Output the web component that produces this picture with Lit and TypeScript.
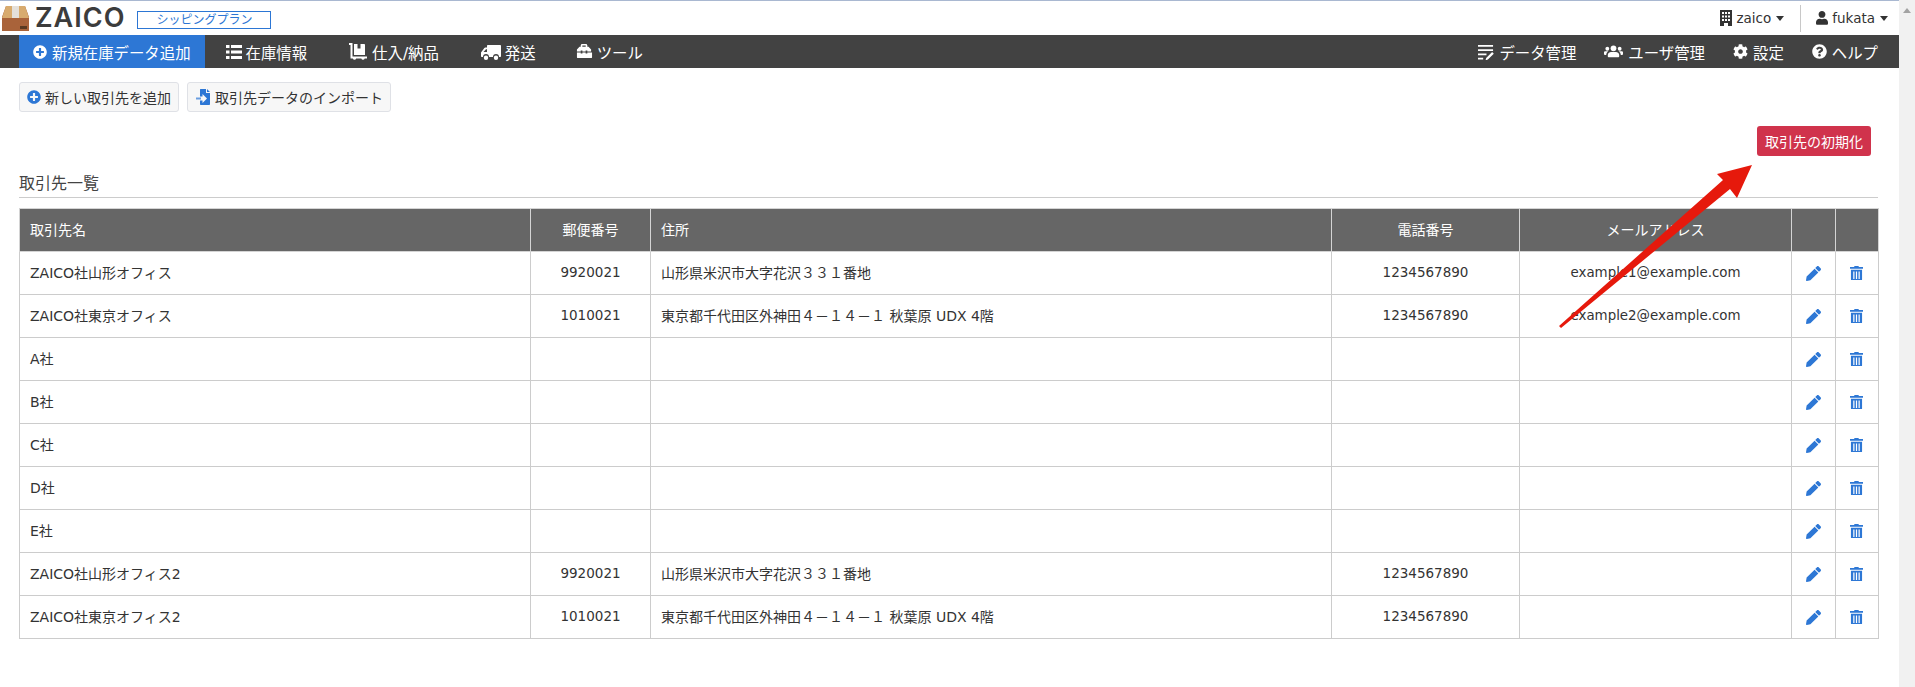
import { LitElement, html, css, svg } from "lit";
import { customElement } from "lit/decorators.js";

const ic = (w: number, vb: string, body: unknown, cls = "") =>
  html`<svg class="ic ${cls}" style="width:${w}px" viewBox="${vb}" fill="currentColor">${body}</svg>`;

const PLUS = svg`<path d="M256 8C119 8 8 119 8 256s111 248 248 248 248-111 248-248S393 8 256 8zm144 276c0 6.6-5.4 12-12 12h-92v92c0 6.6-5.4 12-12 12h-56c-6.6 0-12-5.4-12-12v-92h-92c-6.6 0-12-5.4-12-12v-56c0-6.6 5.4-12 12-12h92v-92c0-6.6 5.4-12 12-12h56c6.6 0 12 5.4 12 12v92h92c6.6 0 12 5.4 12 12v56z"/>`;
const QUESTION = svg`<path d="M504 256c0 136.997-111.043 248-248 248S8 392.997 8 256C8 119.083 119.043 8 256 8s248 111.083 248 248zM262.655 90c-54.497 0-89.255 22.957-116.549 63.758-3.536 5.286-2.353 12.415 2.715 16.258l34.699 26.31c5.205 3.947 12.621 3.008 16.665-2.122 17.864-22.658 30.113-35.797 57.303-35.797 20.429 0 45.698 13.148 45.698 32.958 0 14.976-12.363 22.667-32.534 33.976C247.128 238.528 216 254.941 216 296v4c0 6.627 5.373 12 12 12h56c6.627 0 12-5.373 12-12v-1.333c0-28.462 83.186-29.647 83.186-106.667 0-58.002-60.165-102-116.531-102zM256 338c-25.365 0-46 20.635-46 46 0 25.364 20.635 46 46 46s46-20.636 46-46c0-25.365-20.635-46-46-46z"/>`;
const COG = svg`<path d="M487.4 315.7l-42.6-24.6c4.3-23.2 4.3-47 0-70.2l42.6-24.6c4.9-2.8 7.1-8.6 5.5-14-11.1-35.6-30-67.8-54.7-94.6-3.8-4.1-10-5.1-14.8-2.3L380.8 110c-17.9-15.4-38.5-27.3-60.8-35.1V25.8c0-5.6-3.9-10.5-9.4-11.7-36.7-8.2-74.3-7.8-109.2 0-5.5 1.2-9.4 6.1-9.4 11.7V75c-22.2 7.9-42.8 19.8-60.8 35.1L88.7 85.5c-4.9-2.8-11-1.9-14.8 2.3-24.7 26.7-43.6 58.9-54.7 94.6-1.7 5.4.6 11.2 5.5 14L67.3 221c-4.3 23.2-4.3 47 0 70.2l-42.6 24.6c-4.9 2.8-7.1 8.6-5.5 14 11.1 35.6 30 67.8 54.7 94.6 3.8 4.1 10 5.1 14.8 2.3l42.6-24.6c17.9 15.4 38.5 27.3 60.8 35.1v49.2c0 5.6 3.9 10.5 9.4 11.7 36.7 8.2 74.3 7.8 109.2 0 5.5-1.2 9.4-6.1 9.4-11.7v-49.2c22.2-7.9 42.8-19.8 60.8-35.1l42.6 24.6c4.9 2.8 11 1.9 14.8-2.3 24.7-26.7 43.6-58.9 54.7-94.6 1.5-5.5-.7-11.3-5.6-14.1zM256 336c-44.1 0-80-35.9-80-80s35.9-80 80-80 80 35.9 80 80-35.9 80-80 80z"/>`;
const USER = svg`<path d="M224 256c70.7 0 128-57.3 128-128S294.7 0 224 0 96 57.3 96 128s57.3 128 128 128zm89.6 32h-16.7c-22.2 10.2-46.9 16-72.9 16s-50.6-5.8-72.9-16h-16.7C60.2 288 0 348.2 0 422.4V464c0 26.5 21.5 48 48 48h352c26.5 0 48-21.5 48-48v-41.6c0-74.2-60.2-134.4-134.4-134.4z"/>`;
const PENCIL = svg`<path d="M497.9 142.1l-46.1 46.1c-4.7 4.7-12.3 4.7-17 0l-111-111c-4.7-4.7-4.7-12.3 0-17l46.1-46.1c18.7-18.7 49.1-18.7 67.9 0l60.1 60.1c18.8 18.7 18.8 49.1 0 67.9zM284.2 99.8L21.6 362.4.4 483.9c-2.9 16.4 11.4 30.6 27.8 27.8l121.5-21.3 262.6-262.6c4.7-4.7 4.7-12.3 0-17l-111-111c-4.8-4.7-12.4-4.7-17.1 0z"/>`;
const TRASH = svg`<path fill-rule="evenodd" d="M5 0h4l.7 1H14v2H0V1h4.300zM1 4h12v10.500c0 .8-.7 1.500-1.500 1.500h-9C1.700 16 1 15.300 1 14.500zM3.500 6v8h1.300V6zM6.350 6v8h1.300V6zM9.200 6v8h1.300V6z"/>`;
const LIST = svg`<path d="M0 1h3.500v3H0zM5 1h11v3H5zM0 6.500h3.500v3H0zM5 6.500h11v3H5zM0 12h3.500v3H0zM5 12h11v3H5z"/>`;
const DOLLY = svg`<path d="M0 0h3.500v13.500H18v2h-2.300a1.800 1.800 0 0 1-3.400 0H7.200a1.800 1.800 0 0 1-3.400 0H1.500V2H0zM5 1h3.500v4.500h3V1H15c.6 0 1 .4 1 1v10H5z"/>`;
const TRUCK = svg`<path d="M7 1h12c.6 0 1 .4 1 1v10c0 .6-.4 1-1 1h-1a3 3 0 0 0-6 0H8a3 3 0 0 0-6 0H1c-.6 0-1-.4-1-1V8.500L3 4.500C3.500 3.800 4 3.500 5 3.500h1V2c0-.6.4-1 1-1zM2.500 8H6V5.200H5zM5 11.500a2.200 2.200 0 1 1 0 4.400 2.200 2.200 0 0 1 0-4.400zM15 11.500a2.200 2.200 0 1 1 0 4.400 2.200 2.200 0 0 1 0-4.400z"/>`;
const TOOLBOX = svg`<path d="M5 4V2.500C5 1.700 5.700 1 6.500 1h4c.8 0 1.500.7 1.500 1.500V4h1.300l2.700 3v2H12V8h-1.800v1H6.800V8H5v1H1V7l2.700-3zM6.700 4h3.600V2.700H6.700zM1 10h4v1.200h1.800V10h3.400v1.200H12V10h5v5c0 .5-.5 1-1 1H2c-.5 0-1-.5-1-1z"/>`;
const DATA = svg`<path d="M0 1h16v2H0zM0 5.500h16v2H0zM0 10h9v2H0zM0 14.500h5.500v2H0zM15 8.500l1.800 1.800-6.300 6.300-2.500.7.700-2.500z"/>`;
const USERS = svg`<circle cx="3.500" cy="5" r="2"/><circle cx="16.500" cy="5" r="2"/><circle cx="10" cy="4.500" r="3"/><path d="M0 8.800C0 8 .6 7.600 1.500 7.600h3c-1.300 1-2 2.200-2.200 3.900H1c-.6 0-1-.4-1-1zM20 8.800c0-.8-.6-1.200-1.500-1.200h-3c1.300 1 2 2.200 2.200 3.900H19c.6 0 1-.4 1-1zM7.500 8.300h5c2 0 3.500 1.400 3.500 3.200v1.300c0 .7-.5 1.200-1.200 1.200H5.200C4.500 14 4 13.500 4 12.800v-1.300c0-1.800 1.500-3.200 3.500-3.200z"/>`;
const BUILDING = svg`<path fill-rule="evenodd" d="M0 0h12v16H8v-3H4v3H0zM2 2v2h2V2zM5 2v2h2V2zM8 2v2h2V2zM2 5.500v2h2v-2zM5 5.500v2h2v-2zM8 5.500v2h2v-2zM2 9v2h2V9zM5 9v2h2V9zM8 9v2h2V9z"/>`;
const IMPORT = svg`<path fill-rule="evenodd" d="M4.500 0H10v4h4v11c0 .6-.4 1-1 1H5c-.6 0-1-.4-1-1v-3.500h2.500V14l4.500-4.500L6.500 5v2.500H4V.5c0-.3.2-.5.5-.5zM11 0l3 3h-3z"/><path d="M0 8.500h5v2H0z" opacity=".7"/>`;

type Row = [string, string, string, string, string];
const ROWS: Row[] = [
  ["ZAICO社山形オフィス", "9920021", "山形県米沢市大字花沢３３１番地", "1234567890", "example1@example.com"],
  ["ZAICO社東京オフィス", "1010021", "東京都千代田区外神田４－１４－１ 秋葉原 UDX 4階", "1234567890", "example2@example.com"],
  ["A社", "", "", "", ""],
  ["B社", "", "", "", ""],
  ["C社", "", "", "", ""],
  ["D社", "", "", "", ""],
  ["E社", "", "", "", ""],
  ["ZAICO社山形オフィス2", "9920021", "山形県米沢市大字花沢３３１番地", "1234567890", ""],
  ["ZAICO社東京オフィス2", "1010021", "東京都千代田区外神田４－１４－１ 秋葉原 UDX 4階", "1234567890", ""],
];

@customElement("app-root")
export class AppRoot extends LitElement {
  static styles = css`
    :host {
      display: flex;
      position: relative;
      height: 687px;
      overflow: hidden;
      background: #fff;
      color: #333;
      font-family: "DejaVu Sans", "Noto Sans CJK JP", sans-serif;
      font-size: 14px;
    }
    .ic { display: block; height: auto; flex: none; }
    .page { flex: 1; min-width: 0; border-top: 1px solid #a9b8d1; }
    .scroll { width: 16px; flex: none; background: #f1f1f1; display: flex; justify-content: center; padding-top: 8px; box-sizing: border-box; }
    .scroll i { display: block; width: 0; height: 0; border: 4px solid transparent; border-top: 0; border-bottom: 5px solid #a3a3a3; }

    .top { height: 34px; display: flex; align-items: center; color: #333; }
    .brand { display: flex; align-items: center; padding-left: 2px; }
    .wordmark { font-family: Inter, sans-serif; font-weight: 600; font-size: 27px; line-height: 34px; color: #3c3c3c; margin-left: 6px; letter-spacing: 1px; }
    .plan { margin-left: 12px; width: 134px; height: 18px; box-sizing: border-box; border: 1px solid #2c76d4; color: #2c76d4; font-size: 12px; line-height: 16px; text-align: center; margin-top: 3px; }
    .acct { margin-left: auto; display: flex; align-items: center; padding-right: 11px; height: 27px; font-size: 13.500px; }
    .acct span { display: flex; align-items: center; gap: 4px; line-height: 16px; }
    .caret { width: 0; height: 0; border: 4.500px solid transparent; border-top: 5px solid #333; border-bottom: 0; margin-left: 1px; }
    .sep { width: 1px; align-self: stretch; background: #c8c8c8; margin: 0 15px 0 16px; }

    nav { height: 33px; background: #424242; color: #fff; display: flex; padding: 0 21px 0 19px; font-size: 15.400px; }
    nav a { display: flex; align-items: center; gap: 4px; padding: 0 21px; white-space: nowrap; }
    nav a.new { background: #2d77d5; padding: 0 14px; gap: 5px; }
    nav a.dolly { gap: 5px; }
    nav a.truck { padding-right: 20px; }
    nav a.tool { padding-left: 20px; }
    nav .right { margin-left: auto; display: flex; }
    nav .right a { padding: 0 0 0 28px; gap: 5px; }

    main { padding: 14px 21px 0 19px; }
    .actions { display: flex; gap: 8px; }
    .btn { display: flex; align-items: center; gap: 4px; height: 30px; box-sizing: border-box; border: 1px solid #dfe1e6; border-radius: 3px; background: #f7f7f7; padding: 0 7px; color: #333; white-space: nowrap; }
    .btn.imp { padding-left: 8px; gap: 5px; }
    .btn .ic { color: #2d77d5; }
    .reset-row { display: flex; justify-content: flex-end; padding: 14px 7px 0 0; }
    .reset { height: 30px; width: 114px; box-sizing: border-box; border-radius: 3px; background: #d0334c; color: #fff; display: flex; align-items: center; justify-content: center; font-size: 14px; }
    h2 { margin: 18px 0 0; height: 23px; font-size: 16px; font-weight: 400; line-height: 20px; color: #444; border-bottom: 1px solid #ccc; }

    table { margin-top: 10px; width: 1859px; table-layout: fixed; border-collapse: collapse; }
    th, td { border: 1px solid #ccc; height: 43px; padding: 0 10px 2px; font-weight: 400; text-align: left; box-sizing: border-box; white-space: nowrap; }
    th { background: #666; color: #fff; border-color: #d4d4d4; }
    td.i { padding: 0 11px 0 10px; }
    .c { text-align: center; }
    .num { font-size: 13.500px; }
    .mail { font-size: 13.400px; }
    td .ic { margin: 0 auto; color: #2d77d5; }
    .w1 { width: 511px; } .w2 { width: 120px; } .w3 { width: 681px; } .w4 { width: 188px; } .w5 { width: 272px; } .w6 { width: 44px; } .w7 { width: 43px; }

    .arrow { position: absolute; left: 0; top: 0; width: 1915px; height: 687px; pointer-events: none; }
    .box { display: block; }
  `;

  render() {
    return html`
      <div class="page">
        <header class="top">
          <div class="brand">
            <svg class="box" width="27" height="25" viewBox="0 0 27 25">
              <path d="M0 11 L4 0 H23 L27 11 V25 H0Z" fill="#a9633a"/>
              <path d="M0 12 L4 0 H23 L27 12Z" fill="#d8ab6e"/>
              <path d="M10 0h7v12h-7z" fill="#e4e0da"/>
              <path d="M18 20h7v3h-7z" fill="#5a3a22"/>
            </svg>
            <span class="wordmark">ZAICO</span>
            <div class="plan">シッピングプラン</div>
          </div>
          <div class="acct">
            <span>${ic(12, "0 0 12 16", BUILDING)} zaico <i class="caret"></i></span>
            <div class="sep"></div>
            <span>${ic(12, "0 0 448 512", USER)} fukata <i class="caret"></i></span>
          </div>
        </header>
        <nav>
          <a class="new">${ic(14, "0 0 512 512", PLUS)}新規在庫データ追加</a>
          <a>${ic(16, "0 0 16 16", LIST)}在庫情報</a>
          <a class="dolly">${ic(18, "0 0 18 17", DOLLY)}仕入/納品</a>
          <a class="truck">${ic(20, "0 0 20 16", TRUCK)}発送</a>
          <a class="tool">${ic(17, "0 0 18 17", TOOLBOX)}ツール</a>
          <div class="right">
            <a>${ic(16, "0 0 17 17", DATA)}データ管理</a>
            <a>${ic(19, "0 0 20 15", USERS)}ユーザ管理</a>
            <a>${ic(15, "0 0 512 512", COG)}設定</a>
            <a>${ic(15, "0 0 512 512", QUESTION)}ヘルプ</a>
          </div>
        </nav>
        <main>
          <div class="actions">
            <div class="btn">${ic(14, "0 0 512 512", PLUS)}新しい取引先を追加</div>
            <div class="btn imp">${ic(14, "0 0 14 16", IMPORT)}取引先データのインポート</div>
          </div>
          <div class="reset-row"><div class="reset">取引先の初期化</div></div>
          <h2>取引先一覧</h2>
          <table>
            <thead>
              <tr>
                <th class="w1">取引先名</th><th class="w2 c">郵便番号</th><th class="w3">住所</th>
                <th class="w4 c">電話番号</th><th class="w5 c">メールアドレス</th><th class="w6"></th><th class="w7"></th>
              </tr>
            </thead>
            <tbody>
              ${ROWS.map(r => html`<tr>
                <td>${r[0]}</td><td class="c num">${r[1]}</td><td>${r[2]}</td><td class="c num">${r[3]}</td><td class="c mail">${r[4]}</td>
                <td class="i">${ic(15, "0 0 512 512", PENCIL)}</td>
                <td class="i">${ic(13, "0 0 14 16", TRASH)}</td>
              </tr>`)}
            </tbody>
          </table>
        </main>
      </div>
      <div class="scroll"><i></i></div>
      <svg class="arrow" viewBox="0 0 1915 687"><polygon fill="#e6190c" points="1752,165 1717,174 1723,180 1559,326 1561,328 1730,189 1737,198"/></svg>
    `;
  }
}
